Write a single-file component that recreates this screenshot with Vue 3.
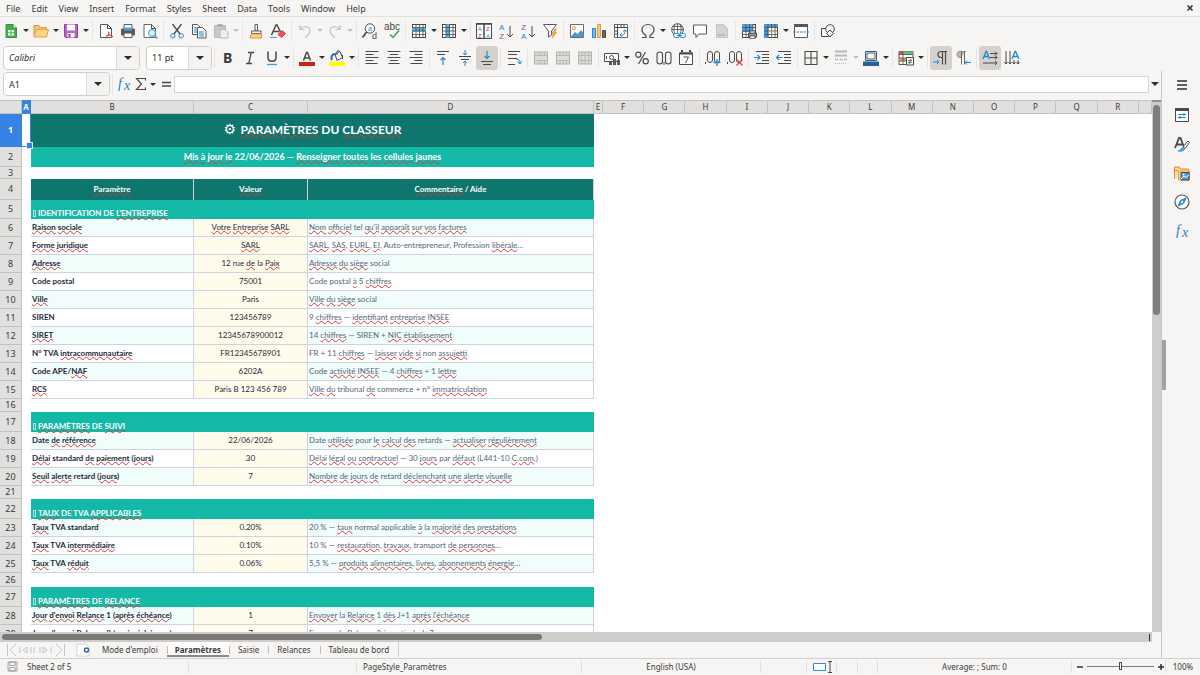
<script setup>
import { ref } from 'vue'

const menus = ['File', 'Edit', 'View', 'Insert', 'Format', 'Styles', 'Sheet', 'Data', 'Tools', 'Window', 'Help']

const K = 'fill="none" stroke="#4a4a48"'
const B = 'fill="none" stroke="#1e8bcd"'
const G = 'fill="none" stroke="#b9b8b6"'
const T = 'font-family="Liberation Sans, sans-serif"'
const grid = `<rect x="1.5" y="1.5" width="13" height="13" fill="#fff" stroke="#4a4a48"/>`
const gridLines = `<path d="M1 4.5h14M1 8h14M1 11.5h14M5 1v14M8.5 1v14M12 1v14" ${K} stroke-width=".8"/>`
const merged = `<rect x="1.5" y="2" width="13" height="12" fill="#deddda" stroke="#b1b0ae"/><path d="M1 5.5h14M1 10.5h14M5 2v3.5M8 2v3.5M11.5 2v3.5M5 10.5v3.5M8 10.5v3.5M11.5 10.5v3.5" ${G}/>`

const icons = {
  new: `<path d="M3 1.5h7l3.5 3.5v9.5H3z" fill="#43b04a" stroke="#38933f"/><path d="M10 1.5V5h3.5" fill="#fff" stroke="#38933f"/><path d="M5 7h6v5.5H5z" fill="#fff"/><path d="M5 9.8h6M8 7v5.5" stroke="#43b04a"/>`,
  open: `<path d="M1 13.5V2.5h5l1.5 2h6V7" fill="#f7c46c" stroke="#d99a3c"/><path d="M1 14 3.5 6.5h12L13.5 14z" fill="#fbd489" stroke="#e0a448"/>`,
  save: `<path d="M1.5 1.5h13v13h-12l-1-1z" fill="#b868c4" stroke="#8f3f9c"/><path d="M4 1.5h8v6H4zM4.5 10h7v4.5h-7z" fill="#fff"/><path d="M5.5 11h2v3.5h-2z" fill="#8f3f9c"/>`,
  pdf: `<path d="M2.5 1.5h7l4 4v9h-11z" fill="#fff" stroke="#5a5957"/><path d="M9.5 1.5v4h4" ${K}/><path d="M7.5 15c3-2 3.500-4 3-6.500M8 13c2-1 5-1 7 .5M10.500 9c0 2 2 4 4.500 5" fill="none" stroke="#e0393e"/>`,
  print: `<path d="M4 1.5h8V6H4z" fill="#fff" stroke="#5a5957"/><rect x="1" y="5.5" width="14" height="7" rx="1" fill="#5a5957"/><path d="M4 4.5h8v3H4z" fill="#4da3e0"/><path d="M4 10h8v4.5H4z" fill="#fff" stroke="#5a5957"/>`,
  preview: `<path d="M2 1.5h7.5l4 4v9H2z" fill="#fff" stroke="#6a6967"/><path d="M9.5 1.5v4h4" ${K}/><circle cx="10" cy="10" r="3.5" fill="#d8ecfa" stroke="#4a9ad8"/><path d="m12.5 12.5 3 3" stroke="#4a9ad8" stroke-width="1.5"/>`,
  cut: `<path d="M3.5 1 11 11M12.5 1 5 11" ${K} stroke-width="1.3"/><circle cx="3.8" cy="12.8" r="2.2" ${B}/><circle cx="12.2" cy="12.8" r="2.2" ${B}/>`,
  copy: `<path d="M1.5 1.5h5l3 3v7h-8z" fill="#fff" stroke="#5a5957"/><path d="M6.5 4.5h5l3.5 3.5v7H6.5z" fill="#fff" stroke="#5a5957"/><path d="M8 9h5M8 11h5M8 13h5M3 5h3M3 7h3M3 9h3" ${B}/>`,
  paste: `<path d="M1.5 2.5h11v12h-11z" fill="#c9c8c6" stroke="#b9b8b6"/><path d="M4.5 1h5v3h-5z" fill="#b0afad"/><path d="M7 6.5h5l3 3V15H7z" fill="#eee" stroke="#b9b8b6"/>`,
  brush: `<path d="M7 1.5h2.5V8H7z" fill="#fff" stroke="#5a5957"/><path d="M3.5 8h9.5v2.5H3.5z" fill="#fff" stroke="#5a5957"/><path d="M3.5 11 2 15h11.5V11z" fill="#fbd08a" stroke="#e09a3c"/>`,
  clear: `<path d="M1.5 12 6 2h1l4 8M3.5 8.5H9" ${K} stroke-width="1.5"/><path d="M0 14.5h7" stroke="#4a9ad8"/><path d="m8 11.5 4-4 3.5 3-4 4z" fill="#f0575c" stroke="#d8363c"/>`,
  undo: `<path d="M3 2v4.5h4.5M3.5 6C6 2.500 13 2.5 13 8c0 3.5-3 4.5-5 6.5" fill="none" stroke="#c4c3c1" stroke-width="1.2"/>`,
  redo: `<path d="M13 2v4.5H8.5M12.5 6C10 2.500 3 2.5 3 8c0 3.5 3 4.5 5 6.5" fill="none" stroke="#c4c3c1" stroke-width="1.2"/>`,
  find: `<circle cx="8" cy="5.500" r="4.700" fill="#fff" stroke="#4a4a48"/><path d="m4.500 9-4 5.5" stroke="#4a4a48" stroke-width="1.8"/><text x="6" y="8" font-size="7" fill="#1e8bcd" ${T}>a</text><text x="10" y="16" font-size="9" fill="#4a4a48" ${T}>d</text>`,
  spell: `<text x="0" y="7" font-size="10" fill="#4a4a48" ${T}>abc</text><path d="m6 11.5 3 3 6-7" fill="none" stroke="#3fa45a" stroke-width="1.5"/>`,
  rows: `${grid}<path d="M1 5h14v3.5H1z" fill="#57aee8"/>${gridLines}`,
  cols: `${grid}<path d="M5 1h4v14H5z" fill="#57aee8"/>${gridLines}`,
  sort: `<path d="M.5 .5h15v15H.5z" fill="#fff" stroke="#4a4a48"/><path d="M0 1h16M8 1v15" stroke="#4a4a48" stroke-width="1.5"/><text x="1.7" y="8" font-size="6" fill="#1e8bcd" ${T}>A</text><text x="2" y="15" font-size="6" fill="#9b3fb0" ${T}>Z</text><text x="10" y="8" font-size="6" fill="#9b3fb0" ${T}>Z</text><text x="10" y="15" font-size="6" fill="#1e8bcd" ${T}>A</text>`,
  asc: `<text x="1" y="7" font-size="8" fill="#1e8bcd" ${T}>A</text><text x="1.2" y="16" font-size="8" fill="#9b3fb0" ${T}>Z</text><path d="M12 3v11M9 11l3 3 3-3" ${K}/>`,
  desc: `<text x="1.2" y="7" font-size="8" fill="#9b3fb0" ${T}>Z</text><text x="1" y="16" font-size="8" fill="#1e8bcd" ${T}>A</text><path d="M12 3v11M9 11l3 3 3-3" ${K}/>`,
  filter: `<path d="M1.5 1.5h13l-5 6.5v4l-3 2V8z" fill="#fff" stroke="#5a5957"/><path d="m13 6-3.500 5h2l-1.5 4 4.5-5.5h-2L14.5 6z" fill="#f6b04c" stroke="#e08f28" stroke-width=".7"/>`,
  image: `<path d="M1.5 1.5h13v13h-13z" fill="#fff" stroke="#6a6967"/><path d="m2 13.5 4-4.5 2.5 2 3.5-4 2.500 3v4H2z" fill="#4a9ad8"/><circle cx="5" cy="5" r="1.5" fill="#fff" stroke="#eb9a38"/>`,
  chart: `<path d="M1.5 5.5h3v9h-3z" fill="#7cc0ee" stroke="#2d7fc0"/><path d="M6.5 1.5h3v13h-3z" fill="#fbc878" stroke="#e09a3c"/><path d="M11.5 7.5h3v7h-3z" fill="#6a6967" stroke="#4a4a48"/>`,
  pivot: `<path d="M1.5 1.5h13v13h-13z" fill="#fff" stroke="#6a6967"/><path d="M1.5 4.5h13M4.5 1.5v13" ${K}/><path d="M8 1.5v3M11 1.5v3M1.5 8h3M1.5 11h3" ${K}/><path d="M7 12c4 1 5-1 5-5M7 12l2-2M7 12l2 1.5M12 7l-2 1.500M12 7l1.500 2" ${B}/>`,
  omega: `<path d="M2 14.5h4v-2C3.5 11 2 9 2 6.5 2 3.5 4.5 1.5 8 1.5s6 2 6 5c0 2.500-1.5 4.5-4 6v2h4" ${K} stroke-width="1.2"/>`,
  link: `<circle cx="7.5" cy="6.5" r="5.8" fill="#fff" stroke="#4a4a48"/><path d="M2 6.5h11.5M3 3.5h9M7.5 1v10M5 1.5C3.5 5 3.5 8 5 11M10 1.5c1.5 3.5 1.5 6 0 9.5" ${K} stroke-width=".8"/><rect x="3.5" y="10.5" width="6" height="4" rx="2" fill="#fff" stroke="#1e8bcd"/><rect x="9.5" y="10.5" width="6" height="4" rx="2" fill="#fff" stroke="#1e8bcd"/><path d="M7 12.5h5" ${B}/>`,
  comment: `<path d="M1.5 2h13v9H7l-3 3.5V11H1.5z" fill="#fff" stroke="#5a5957"/>`,
  headfoot: `<path d="M2.5 1.5h7l4 4v9h-11z" fill="#d5d4d2" stroke="#c4c3c1"/><path d="M4 11h7v2H4z" fill="#bbb"/>`,
  printarea: `${grid}<path d="M1 1h11v8H1z" fill="#4da3e0"/>${gridLines}<path d="M7.5 10h8v4h-8z" fill="#7d9bb0" stroke="#4a4a48"/><path d="M9 8h5v2H9zM9 13h5v2.5H9z" fill="#fff" stroke="#4a4a48" stroke-width=".8"/>`,
  freeze: `${grid}<path d="M1 1h14v3.5H1zM1 1h4.5v14H1z" fill="#3f9be0"/>${gridLines}<path d="M9 4.5v10M5.5 8.5h9" stroke="#f0a848" stroke-width=".6"/>`,
  split: `<path d="M1.5 1.5h13v13h-13z" fill="#fff" stroke="#5a5957"/><path d="M1 1h14v3H1z" fill="#5a5957"/><path d="M0 9h16" stroke="#1e8bcd" stroke-dasharray="2.5 1"/>`,
  draw: `<path d="M1.5 5.5h7v8h-7z" ${K}/><circle cx="10" cy="6" r="4.3" fill="#f6f5f4" stroke="#4a4a48"/><path d="m10 7 3.5 3.500L10 14l-3.500-3.500z" fill="#f6f5f4" stroke="#4a4a48"/>`,
  bold: `<text x="3" y="13" font-size="14" font-weight="700" fill="#3a3a38" font-family="Noto Sans, sans-serif">B</text>`,
  italic: `<path d="M6 2.5h6M4 13.5h6M9.2 2.5 6.8 13.5" ${K} stroke-width="1.3"/>`,
  underline: `<path d="M4 1.5v6c0 5 8 5 8 0v-6" ${K} stroke-width="1.5"/><path d="M3 14.5h10" stroke="#4a9ad8" stroke-width="1.3"/>`,
  fontcolor: `<path d="m4.5 10.5 3-8h1l3 8M5.5 8h5" ${K} stroke-width="1.5"/><path d="M0 12h16v4H0z" fill="#c9211e"/>`,
  highlight: `<path d="m6 4 5-2.5 2.5 6-5.5 3z" fill="#fff" stroke="#4a4a48"/><path d="M8 5V1.5c1-1.5 2.500-1 2.5.5M13.5 5v4" ${K}/><path d="M6.5 4C3 4 1.5 7 3 10" fill="none" stroke="#1e6fa8" stroke-width="2"/><path d="M0 12h16v4H0z" fill="#ffff00"/>`,
  left: `<path d="M1.5 1.5h13M1.5 4.5h8M1.5 7.5h13M1.5 10.5h8M1.5 13.5h12" ${K}/>`,
  center: `<path d="M1.5 1.5h13M4 4.5h8M1.5 7.5h13M4 10.5h8M2.5 13.5h11" ${K}/>`,
  right: `<path d="M1.5 1.5h13M6.5 4.5h8M1.5 7.5h13M6.5 10.5h8M2.5 13.5h12" ${K}/>`,
  top: `<path d="M2 1.5h12M2 4.5h8" ${K} stroke-width="1.2"/><path d="M8 15V7.5M5.5 10 8 7.5l2.5 2.5" ${B} stroke-width="1.2"/>`,
  middle: `<path d="M2 6.5h12M4 9.5h8" ${K} stroke-width="1.2"/><path d="M8 0v5M6 3l2 2 2-2M8 16v-5M6 13l2-2 2 2" ${B}/>`,
  bottom: `<path d="M2 11.5h12M4 14.5h8" ${K} stroke-width="1.2"/><path d="M8 1v7.5M5.5 6 8 8.5 10.5 6" ${B} stroke-width="1.2"/>`,
  wrap: `<path d="M2 1.5h12M2 4.5h9M2 8.5h9M2 14.5h7" ${K} stroke-width="1.2"/><path d="M10 9c3 0 4 1.500 4 5M11.5 11.5l2.5 2.500 1.5-3" ${B}/>`,
  merge: merged,
  mergec: merged,
  unmerge: merged + `<path d="M4 5.5v5M8 5.5v5M12 5.5v5" ${G}/>`,
  currency: `<path d="M.5 3.5h14v8H.5z" fill="#fff" stroke="#4a4a48"/><circle cx="7.5" cy="7.5" r="2" ${K}/><path d="M2.5 6v3" ${K}/><path d="M5 12h3v3H5zM9 9h3v6H9zM13 10h3v5h-3z" fill="#5a5957"/>`,
  percent: `<circle cx="4.3" cy="4.8" r="2.6" ${K} stroke-width="1.2"/><circle cx="11.7" cy="11.2" r="2.6" ${K} stroke-width="1.2"/><path d="M11.5 2 4.5 14" ${K} stroke-width="1.2"/>`,
  number: `<rect x="1" y="2" width="5.5" height="12" rx="2.7" ${K} stroke-width="1.1"/><rect x="9.5" y="2" width="5.5" height="12" rx="2.7" ${K} stroke-width="1.1"/><path d="M8 12v3" ${K}/>`,
  date: `<path d="M1.5 3h13v11.5h-13z" fill="#fff" stroke="#4a4a48"/><path d="M1.5 3.500h13M4 0v2M12 0v2" fill="none" stroke="#4a4a48" stroke-width="2"/><path d="M5.5 7h5L7.5 13" ${K}/>`,
  adddec: `<path d="M.5 12v2" ${K}/><rect x="2.5" y="1.5" width="5" height="11" rx="2.5" ${K}/><rect x="9.5" y="1.5" width="5" height="11" rx="2.5" ${K}/><path d="M12 9v7M8.5 12.5h7" ${B} stroke-width="1.3"/>`,
  deldec: `<path d="M.5 12v2" ${K}/><rect x="2.5" y="1.5" width="5" height="11" rx="2.5" ${K}/><rect x="9.5" y="1.5" width="5" height="11" rx="2.5" ${K}/><path d="m9.5 9.5 6 6M15.5 9.5l-6 6" fill="none" stroke="#e0393e" stroke-width="1.2"/>`,
  indent: `<path d="M2 1.5h13M8 4.5h7M8 7.5h7M8 10.5h7M2 13.5h13" ${K}/><path d="M0 7.5h6M3.5 5 6 7.5 3.5 10" ${B} stroke-width="1.2"/>`,
  outdent: `<path d="M2 1.5h13M8 4.5h7M8 7.5h7M8 10.5h7M2 13.5h13" ${K}/><path d="M6.5 7.5H.5M3 5 .5 7.5 3 10" ${B} stroke-width="1.2"/>`,
  borders: `<path d="M2 1.5h12v13H2zM8 1.5v13M2 8h12" fill="none" stroke="#4a4a48" stroke-width="1.1"/>`,
  lines: `<path d="M2 1.5h12M2 5.5h12" ${G} stroke-width="2"/><path d="M2 9.5h12" ${G} stroke-dasharray="3 1.5" stroke-width="1.5"/><path d="M2 13.5h12" ${G} stroke-dasharray="1 1"/>`,
  bgcolor: `<path d="M2.5 1.5h11v9h-11z" fill="#fff" stroke="#1e5fa0"/><path d="M4 3h8v6H4z" fill="#f3f3f3" stroke="#5a5957"/><path d="M0 11.5h16V16H0z" fill="#2a6099"/>`,
  cond: `<path d="M1 1.5h14v13H1z" fill="#fff" stroke="#5a5957"/><path d="M1 1.5h9v3H1z" fill="#e0575c"/><path d="M5 1.5h10v3H5z" fill="#67c07a"/><path d="M1 8h7v3H1z" fill="#f0a060"/><path d="M1 4.5h14M1 8h8M1 11h7M5 1.5v13" ${K} stroke-width=".8"/><path d="M8.5 7.5h7v7.5h-7z" fill="#fff" stroke="#4a4a48"/><path d="M10 10.5h4M10 12.5h4M13 9l-2 5" ${K} stroke-width=".8"/>`,
  ltr: `<path d="M14 1.5H8c-4 0-4 6 0 6h1M9.5 1.5v13M12.5 1.5v13" ${K} stroke-width="1.2"/><path d="M0 12h6M4 10l2 2-2 2" ${B}/>`,
  rtl: `<path d="M11 1.5H5c-4 0-4 6 0 6h1" fill="#bbb" stroke="#8a8987"/><path d="M6.5 1.5v13M9.5 1.5v13" fill="none" stroke="#6a6967"/><path d="M16 12.5h-6M12 10.5l-2 2 2 2" ${B}/>`,
  horiz: `<path d="m1 9 3-7.5h.6L7.5 9M2 6.5h4.500" ${B} stroke-width="1.3"/><path d="M8 3.5h7M8 7.5h7M1 13h14M13 1.5l2 2-2 2M13 5.5l2 2-2 2M13 11l2 2-2 2" ${K}/>`,
  vert: `<path d="m8 9 3-7.5h.6L15 9M9 6.5h4.5" ${B} stroke-width="1.3"/><path d="M2 1v13M6 1v13M10 10v4M14 10v4M.5 12 2 14l1.5-2M4.500 12 6 14l1.5-2M8.5 12l1.5 2 1.5-2M12.5 12l1.5 2 1.5-2" ${K}/>`,
  fx: `<text x="2" y="12" font-size="14" font-style="italic" fill="#1e7fc8" font-family="Liberation Serif, serif">f</text><text x="8" y="14" font-size="14" font-style="italic" fill="#1e7fc8" font-family="Liberation Serif, serif">x</text>`,
  sigma: `<path d="M12.5 4.5v-2h-9L8.5 8l-5 5.5h9v-2" ${K} stroke-width="1.2"/>`,
  equals: `<path d="M4 6.5h9M4 10h9" ${K} stroke-width="1.5"/>`,
  hamburger: `<path d="M3 4h10M3 8h10M3 12h10" stroke="#2e2e2c" stroke-width="1.5"/>`,
  props: `<path d="M1.5 1.5h13v13h-13z" fill="#fff" stroke="#4a4a48"/><path d="M1 1h14v3H1z" fill="#4a4a48"/><path d="M4 7.5h8M4 10.5h8M10 6v3M6 9v3" ${B}/>`,
  styles: `<path d="m1 12 4-10h1.5l3 8M2.5 8.5H9" ${K} stroke-width="1.8"/><path d="m9 11 5-6 1.5 1.5-4.5 6z" fill="#fff" stroke="#4a4a48"/><path d="M4 15c3 0 3-4 6-3.5 2 2-1 4.5-6 3.5z" fill="#4da3e0" stroke="#1e7fc8" stroke-width=".6"/>`,
  gallery: `<path d="M.5 13V2h5l1 2h8v2" fill="#fbd9a8" stroke="#e8842c"/><path d="M.5 14V5.5h3" fill="none" stroke="#e8842c"/><path d="M4.5 6h11v9h-11z" fill="#fbe08a" stroke="#e8a23c"/><path d="M7 7.5h8V15H7z" fill="#4a9ad8" stroke="#4a4a48"/><path d="m7 14 3-3 2 1.5 3-2.5" fill="none" stroke="#fff"/><circle cx="9.5" cy="9.5" r="1" fill="#fff"/>`,
  navigator: `<circle cx="8" cy="8" r="7" fill="#fff" stroke="#5a5957" stroke-width="1.2"/><path d="m12 4-2.5 5.5L4 12l2.5-5.5z" fill="#4da3e0" stroke="#1e7fc8"/><circle cx="8" cy="8" r="1" fill="#fff"/>`,
  docsave: `<path d="M1.5 1.5h13v13h-13zM4 1.5h8v5H4zM4 9.5h8v5H4z" fill="none" stroke="#9a9997" stroke-width="1.3"/>`,
  close: `<path d="m4 4 8 8M12 4l-8 8" stroke="#2e2e2c" stroke-width="2.5"/>`,
}

const b = (icon, label, o = {}) => ({ icon, label, ...o })
const m = { menu: true }
const standard = [
  [b('new', 'New', m), b('open', 'Open', m), b('save', 'Save', m)],
  [b('pdf', 'Export as PDF'), b('print', 'Print'), b('preview', 'Print preview')],
  [b('cut', 'Cut'), b('copy', 'Copy'), b('paste', 'Paste', { menu: true, off: true })],
  [b('brush', 'Clone formatting'), b('clear', 'Clear formatting')],
  [b('undo', 'Undo', { menu: true, off: true }), b('redo', 'Redo', { menu: true, off: true })],
  [b('find', 'Find and replace'), b('spell', 'Spelling')],
  [b('rows', 'Row', m), b('cols', 'Column', m)],
  [b('sort', 'Sort'), b('asc', 'Sort ascending'), b('desc', 'Sort descending'), b('filter', 'AutoFilter')],
  [b('image', 'Image'), b('chart', 'Chart'), b('pivot', 'Pivot table')],
  [b('omega', 'Special character', m), b('link', 'Hyperlink'), b('comment', 'Comment'), b('headfoot', 'Headers and footers', { off: true })],
  [b('printarea', 'Define print area'), b('freeze', 'Freeze rows and columns', m), b('split', 'Split window')],
  [b('draw', 'Draw functions')],
]
const formatting = [
  [b('bold', 'Bold'), b('italic', 'Italic'), b('underline', 'Underline', m)],
  [b('fontcolor', 'Font color', m), b('highlight', 'Highlighting', m)],
  [b('left', 'Align left'), b('center', 'Center'), b('right', 'Align right')],
  [b('top', 'Align top'), b('middle', 'Center vertically'), b('bottom', 'Align bottom', { on: true })],
  [b('wrap', 'Wrap text')],
  [b('merge', 'Merge and center', { off: true }), b('mergec', 'Merge cells', { off: true }), b('unmerge', 'Unmerge', { off: true })],
  [b('currency', 'Currency', m), b('percent', 'Percent'), b('number', 'Number'), b('date', 'Date')],
  [b('adddec', 'Add decimal place'), b('deldec', 'Delete decimal place')],
  [b('indent', 'Increase indent'), b('outdent', 'Decrease indent')],
  [b('borders', 'Borders', m), b('lines', 'Border style', { menu: true, off: true }), b('bgcolor', 'Background color', m)],
  [b('cond', 'Conditional formatting', m)],
  [b('ltr', 'Left to right', { on: true }), b('rtl', 'Right to left')],
  [b('horiz', 'Text direction left to right', { on: true }), b('vert', 'Text direction top to bottom')],
]
const sidebar = [b('props', 'Properties'), b('styles', 'Styles'), b('gallery', 'Gallery'), b('navigator', 'Navigator'), b('fx', 'Functions')]

const columns = 'ABCDEFGHIJKLMNOPQR'.split('')

// A leading underscore flags a word for the spell checker.
const rows = [
  { n: 1, kind: 'title', a: '_PARAMÈTRES DU _CLASSEUR' },
  { n: 2, kind: 'subtitle', a: '_Mis _à _jour _le 22/06/2026 — _Renseigner _toutes _les _cellules _jaunes' },
  { n: 3, kind: 'blank short' },
  { n: 4, kind: 'head', a: '_Paramètre', b: '_Valeur', c: '_Commentaire / Aide' },
  { n: 5, kind: 'section first', a: 'IDENTIFICATION DE _L\'ENTREPRISE' },
  { n: 6, a: '_Raison _sociale', b: '_Votre _Entreprise _SARL', c: '_Nom _officiel tel _qu\'il _apparaît _sur _vos _factures', alt: true },
  { n: 7, a: '_Forme _juridique', b: '_SARL', c: '_SARL, _SAS, _EURL, _EI, Auto-entrepreneur, Profession _libérale…' },
  { n: 8, a: '_Adresse', b: '12 rue _de la _Paix', c: '_Adresse _du _siège social', alt: true },
  { n: 9, a: 'Code postal', b: '75001', c: 'Code postal _à 5 _chiffres' },
  { n: 10, a: '_Ville', b: 'Paris', c: '_Ville _du _siège social', alt: true },
  { n: 11, a: 'SIREN', b: '123456789', c: '9 _chiffres — _identifiant _entreprise _INSEE' },
  { n: 12, a: '_SIRET', b: '12345678900012', c: '14 _chiffres — SIREN + _NIC _établissement', alt: true },
  { n: 13, a: 'N° TVA _intracommunautaire', b: 'FR12345678901', c: 'FR + 11 _chiffres — _laisser _vide _si non _assujetti' },
  { n: 14, a: 'Code APE/_NAF', b: '6202A', c: 'Code _activité _INSEE — 4 _chiffres + 1 _lettre', alt: true },
  { n: 15, a: '_RCS', b: 'Paris B 123 456 789', c: '_Ville _du tribunal _de commerce + n° _immatriculation' },
  { n: 16, kind: 'blank' },
  { n: 17, kind: 'section', a: '_PARAMÈTRES DE _SUIVI' },
  { n: 18, a: 'Date _de _référence', b: '22/06/2026', c: 'Date _utilisée pour _le _calcul _des retards — _actualiser _régulièrement', alt: true },
  { n: 19, a: '_Délai standard _de _paiement (_jours)', b: '30', c: '_Délai _légal _ou _contractuel — 30 _jours par _défaut (L441-10 _C._com.)' },
  { n: 20, a: '_Seuil _alerte retard (_jours)', b: '7', c: '_Nombre _de _jours _de retard _déclenchant _une _alerte _visuelle', alt: true },
  { n: 21, kind: 'blank' },
  { n: 22, kind: 'section', a: '_TAUX DE TVA _APPLICABLES' },
  { n: 23, a: '_Taux TVA standard', b: '0.20%', c: '20 % — _taux normal applicable _à la _majorité _des _prestations', alt: true },
  { n: 24, a: '_Taux TVA _intermédiaire', b: '0.10%', c: '10 % — _restauration, _travaux, transport _de _personnes…' },
  { n: 25, a: '_Taux TVA _réduit', b: '0.06%', c: '5,5 % — _produits _alimentaires, _livres, _abonnements _énergie…', alt: true },
  { n: 26, kind: 'blank tall' },
  { n: 27, kind: 'section', a: '_PARAMÈTRES DE _RELANCE' },
  { n: 28, a: '_Jour _d\'envoi _Relance 1 (_après _échéance)', b: '1', c: '_Envoyer la _Relance 1 _dès J+1 _après _l\'échéance', alt: true },
  { n: 29, a: '_Jour _d\'envoi _Relance 2 (_après _échéance)', b: '7', c: '_Envoyer la _Relance 2 _à _partir _de J+7' },
]

const parts = (text) =>
  text.split(/(_[\p{L}']+)/u).filter(Boolean).map((t) => (t[0] === '_' ? { t: t.slice(1), bad: true } : { t, bad: false }))

const cellsOf = (r) => {
  if (!r.a) return []
  if (r.b === undefined) return [{ cls: 'wide', span: 3, parts: parts(r.a) }]
  return [
    { cls: 'label', span: 1, parts: parts(r.a) },
    { cls: 'value', span: 1, parts: parts(r.b) },
    { cls: 'note', span: 1, parts: parts(r.c) },
  ]
}
const isSection = (r) => (r.kind || '').startsWith('section')

const sheets = ["Mode d'emploi", 'Paramètres', 'Saisie', 'Relances', 'Tableau de bord']
const active = ref('Paramètres')
const fontName = ref('Calibri')
const fontSize = ref('11 pt')
const cellRef = ref('A1')
const formula = ref('')
const zoom = ref(50)
</script>

<template>
  <div class="app">
    <nav class="menubar">
      <button v-for="x in menus" :key="x" type="button">{{ x }}</button>
      <button class="close" type="button" aria-label="Close document"><svg viewBox="0 0 16 16" v-html="icons.close" /></button>
    </nav>

    <div class="toolbar" role="toolbar" aria-label="Standard">
      <div v-for="(g, i) in standard" :key="i" class="group">
        <template v-for="x in g" :key="x.icon">
          <button class="tool" type="button" :aria-label="x.label" :disabled="x.off"><svg viewBox="0 0 16 16" v-html="icons[x.icon]" /></button>
          <button v-if="x.menu" class="drop" type="button" :aria-label="x.label + ' options'" :disabled="x.off"><i /></button>
        </template>
      </div>
    </div>

    <div class="toolbar" role="toolbar" aria-label="Formatting">
      <div class="combo font">
        <input v-model="fontName" aria-label="Font name"><button type="button" aria-label="Font list"><i /></button>
      </div>
      <div class="combo size">
        <input v-model="fontSize" aria-label="Font size"><button type="button" aria-label="Size list"><i /></button>
      </div>
      <div v-for="(g, i) in formatting" :key="i" class="group lead">
        <template v-for="x in g" :key="x.icon">
          <button class="tool" :class="{ on: x.on }" type="button" :aria-label="x.label" :disabled="x.off"><svg viewBox="0 0 16 16" v-html="icons[x.icon]" /></button>
          <button v-if="x.menu" class="drop" type="button" :aria-label="x.label + ' options'" :disabled="x.off"><i /></button>
        </template>
      </div>
    </div>

    <div class="work">
      <main>
        <div class="formulabar">
          <div class="combo cellref">
            <input v-model="cellRef" aria-label="Name box"><button type="button" aria-label="Named ranges"><i /></button>
          </div>
          <div class="group lead">
            <button class="fn" type="button" aria-label="Function wizard"><svg viewBox="0 0 16 16" v-html="icons.fx" /></button>
            <button class="fn" type="button" aria-label="Select function"><svg viewBox="0 0 16 16" v-html="icons.sigma" /></button>
            <button class="drop" type="button" aria-label="Function options"><i /></button>
            <button class="fn" type="button" aria-label="Formula"><svg viewBox="0 0 16 16" v-html="icons.equals" /></button>
          </div>
          <input v-model="formula" class="formula" aria-label="Formula input">
          <button class="drop big" type="button" aria-label="Expand formula bar"><i /></button>
        </div>

        <div class="sheetrow">
          <div class="sheet">
            <table>
              <colgroup>
                <col class="c-n"><col class="c-a"><col class="c-b"><col class="c-c"><col class="c-d"><col class="c-e">
                <col v-for="i in 13" :key="i"><col class="c-end">
              </colgroup>
              <thead>
                <tr>
                  <th />
                  <th v-for="c in columns" :key="c" scope="col" :class="{ sel: c === 'A' }">{{ c }}</th>
                  <th />
                </tr>
              </thead>
              <tbody>
                <tr v-for="r in rows" :key="r.n" :class="[r.kind || 'data', { alt: r.alt }]">
                  <th scope="row" :class="{ sel: r.n === 1 }">{{ r.n }}</th>
                  <td :class="{ cursor: r.n === 1 }" />
                  <td v-for="c in cellsOf(r)" :key="c.cls" :colspan="c.span" :class="c.cls"><span v-if="r.kind === 'title'" class="gear">⚙ </span><span v-if="isSection(r)" class="tofu" /><template v-for="(p, k) in c.parts" :key="k"><span v-if="p.bad" class="bad">{{ p.t }}</span><template v-else>{{ p.t }}</template></template></td>
                </tr>
              </tbody>
            </table>
          </div>
          <div class="vscroll"><div /></div>
        </div>
        <div class="hscroll"><div /><span /></div>

        <div class="tabs">
          <button class="nav" type="button" aria-label="Scroll sheet tabs">
            <svg viewBox="0 0 62 14"><path d="M2.5 1v12M11 1 5 7l6 6M22 4l-4 3 4 3zM26 4v6M29 4v6M35 4v6M38 4l4 3-4 3zM51 1l6 6-6 6M59.5 1v12M15 4v6M46 4v6" /></svg>
          </button>
          <button class="add" type="button" aria-label="Add sheet">
            <svg viewBox="0 0 14 14"><path d="M1 1h9l3 3v9H1z" fill="#fff" stroke="#d5d4d2" /><circle cx="10.5" cy="7" r="2" fill="#fff" stroke="#2a66b0" stroke-width="1.5" /></svg>
          </button>
          <button v-for="s in sheets" :key="s" class="tab" :class="{ active: s === active }" type="button" @click="active = s">{{ s }}</button>
        </div>
      </main>
      <aside>
        <div class="grip"><span /></div>
        <div class="deck">
          <button type="button" aria-label="Sidebar settings"><svg viewBox="0 0 16 16" v-html="icons.hamburger" /></button>
          <button v-for="x in sidebar" :key="x.icon" type="button" :aria-label="x.label"><svg viewBox="0 0 16 16" v-html="icons[x.icon]" /></button>
        </div>
      </aside>
    </div>

    <footer>
      <div class="first"><svg viewBox="0 0 16 16" v-html="icons.docsave" />Sheet 2 of 5</div>
      <div />
      <div class="style">PageStyle_Paramètres</div>
      <div class="mid">English (USA)</div>
      <div />
      <div class="modes">
        <svg viewBox="0 0 22 12"><path d="M1.5 2.5h12v7h-12z" fill="#fff" stroke="#2f8fc9" /><path d="M16 .5h4M18 .5v11M16 11.5h4" fill="none" stroke="#4a4a48" /></svg>
      </div>
      <div /><div />
      <div class="mid">Average: ; Sum: 0</div>
      <div class="zoom">
        <button type="button" aria-label="Zoom out"><svg viewBox="0 0 8 8"><path d="M1 4h6" /></svg></button>
        <input v-model="zoom" type="range" min="0" max="100" aria-label="Zoom">
        <button type="button" aria-label="Zoom in"><svg viewBox="0 0 8 8"><path d="M1 4h6M4 1v6" /></svg></button>
      </div>
      <div class="pct">100%</div>
    </footer>
  </div>
</template>

<style>
body { margin: 0; overflow: hidden; }
</style>

<style scoped>
* { box-sizing: border-box; }
.app {
  display: flex; flex-direction: column; height: 100vh;
  background: #f6f5f4; color: #3a3a38;
  font: 9px "Noto Sans", sans-serif;
}
button { border: 0; padding: 0; margin: 0; background: none; font: inherit; color: inherit; display: flex; align-items: center; justify-content: center; }
input { font: inherit; color: #2e2e2c; border: 0; margin: 0; outline: 0; min-width: 0; }
svg { display: block; width: 16px; height: 16px; flex: none; overflow: visible; }

.menubar { display: flex; gap: 11px; height: 17px; padding: 0 5px 0 6px; align-items: center; border-bottom: 1px solid #e4e3e1; flex: none; }
.close { margin-left: auto; }
.close svg { width: 10px; height: 10px; }

.toolbar { display: flex; align-items: center; height: 27px; flex: none; }
.group { display: flex; align-items: center; }
.group + .group::before, .lead::before { content: ""; width: 1px; height: 20px; margin: 0 2px; background: #e6e5e3; }
.tool { width: 22px; height: 24px; border-radius: 3px; }
.on { background: #d5d2ce; }
.drop { width: 8px; height: 20px; }
.drop i, .combo i { border: solid transparent; border-width: 3px 3px 0; border-top-color: #2e2e2c; }
.drop:disabled i { border-top-color: #c0bfbd; }
.drop.big { width: 12px; }
.drop.big i, .combo i { border-width: 4px 4px 0; }

.combo { display: flex; height: 24px; border: 1px solid #d2cfcb; border-radius: 4px; background: #fff; overflow: hidden; flex: none; }
.combo input { flex: 1; padding: 0 5px; background: none; }
.combo button { width: 23px; background: #f4f3f2; border-left: 1px solid #dddbd8; }
.font { width: 137px; margin-left: 3px; }
.font input { font-style: italic; }
.size { width: 66px; margin-left: 6px; }
.cellref { width: 107px; margin-left: 3px; }

.work { display: flex; flex: 1; min-height: 0; }
main { display: flex; flex-direction: column; flex: 1; min-width: 0; }
.formulabar { display: flex; align-items: center; height: 29px; padding-bottom: 3px; flex: none; }
.fn { width: 17px; height: 20px; }
.formula { flex: 1; height: 17px; background: #fff; border: 1px solid #d8d6d3; }

.sheetrow { display: flex; flex: 1; min-height: 0; }
.sheet { flex: 1; min-width: 0; background: #fff; overflow: hidden; }
table { table-layout: fixed; width: 100%; border-collapse: separate; border-spacing: 0; line-height: 10px; }
.c-n { width: 22px; } .c-a { width: 9px; } .c-b { width: 163px; } .c-c { width: 114px; } .c-d { width: 286px; } .c-e { width: 9px; } .c-end { width: 13px; }
th, td { padding: 0; white-space: nowrap; }
thead th { height: 14px; background: #e1e0de; border: solid #c3c2c0; border-width: 1px 1px 1px 0; font-size: 8px; font-weight: 400; }
tbody th { background: #e1e0de; border: solid #c3c2c0; border-width: 0 1px 1px 0; font-weight: 400; }
thead .sel, tbody .sel { background: #3584e4; border-color: #3584e4; color: #fff; font-weight: 700; }
td { font-family: Lato, sans-serif; }
.cursor { position: relative; border: solid #3584e4; border-width: 0 1px 1px 0; }
.cursor::after { content: ""; position: absolute; right: -3px; bottom: -3px; width: 5px; height: 5px; background: #3584e4; border: 1px solid #dbe8fa; z-index: 1; }
.bad { text-decoration: underline wavy #d8383c 1px; text-decoration-skip-ink: none; text-underline-offset: 0; }

.title { height: 33px; } .subtitle { height: 20px; } .head { height: 21px; } .section { height: 20px; } .first.section { height: 19px; }
.data { height: 18px; } .blank { height: 13px; } .short { height: 12px; } .tall { height: 14px; }
.wide { background: #14b8a6; color: #fff; font-weight: 700; }
.title .wide { background: #0f766e; font-size: 12px; line-height: 16px; padding-bottom: 2px; text-align: center; }
.gear { font: 14px/16px "DejaVu Sans", sans-serif; }
.subtitle .wide { text-align: center; font-size: 9px; }
.section .wide { vertical-align: bottom; font-size: 8px; padding: 0 0 1px 2px; }
.tofu { display: inline-block; width: 3px; height: 7px; margin-right: 2px; border: 1px solid #b6e8e2; vertical-align: -1px; }
.head .label, .head .value, .head .note { background: #0f766e; color: #fff; font-weight: 700; font-size: 8px; text-align: center; border-right: 1px solid #cbd5e1; padding-bottom: 2px; }
.data td { font-size: 8px; padding-bottom: 1px; }
.data .label, .data .value, .data .note { border: solid #cbd5e1; border-width: 0 1px 1px 0; }
.data .label { font-weight: 700; color: #1e293b; padding-left: 1px; }
.data .value { background: #fffbeb; text-align: center; color: #1e293b; }
.data .note { color: #57657a; padding-left: 1px; }
.alt .label, .alt .note { background: #f0fdfa; }

.vscroll { width: 9px; background: #cecdcc; border-top: 2px solid #8f8e8c; padding: 3px 1px; flex: none; }
.vscroll div { height: 40%; border-radius: 4px; background: #7f7e7d; }
.hscroll { display: flex; align-items: center; justify-content: space-between; height: 10px; margin-right: 9px; padding: 0 2px; background: #cecdcc; flex: none; }
.hscroll div { width: 47%; height: 6px; border-radius: 3px; background: #7a7978; }
.hscroll span { width: 1px; height: 7px; background: #2e2e2c; }

.tabs { display: flex; height: 16px; font-size: 8px; flex: none; }
.nav { width: 72px; }
.nav svg { width: 62px; height: 14px; fill: none; stroke: #c6c5c3; }
.add { width: 21px; }
.add svg { width: 14px; height: 14px; }
.tab { padding: 0 9px; position: relative; height: 15px; }
.tab + .tab::before { content: ""; position: absolute; left: 0; top: 4px; width: 1px; height: 8px; background: #bdbcba; }
.tab:last-child { border-right: 1px solid #cfcecc; }
.tab.active { background: #fff; font-weight: 700; padding: 2px 8px 0; border-bottom: 2px solid #8a8987; }

aside { display: flex; width: 39px; border-left: 1px solid #c9c8c6; flex: none; }
.grip { display: flex; align-items: center; width: 4px; }
.grip span { width: 4px; height: 50px; background: #a3a2a0; }
.deck { display: flex; flex-direction: column; gap: 9px; padding-top: 4px; }
.deck button { width: 32px; height: 20px; }
.deck button:first-child { margin-bottom: 1px; }

footer {
  display: grid; grid-template-columns: 189fr 168fr 225fr 179fr 46px 30px 21px 20px 194fr 94px 34px;
  height: 17px; border-top: 1px solid #d0cfcd; font-size: 8px; flex: none;
}
footer > div { display: flex; align-items: center; border-right: 1px solid #e2e1df; margin: 1px 0 2px; white-space: nowrap; }
footer .first { padding-left: 7px; gap: 9px; }
.first svg { width: 11px; height: 11px; }
.style { padding-left: 6px; }
.mid { justify-content: center; }
.modes { padding-left: 5px; }
.modes svg { width: 22px; height: 12px; }
.zoom { gap: 3px; padding-left: 4px; }
.zoom svg { width: 8px; height: 8px; stroke: #2e2e2c; stroke-width: 1.5; }
.zoom input { flex: 1; height: 12px; appearance: none; background: none; }
.zoom input::-webkit-slider-runnable-track { height: 1px; background: #7a7978; }
.zoom input::-webkit-slider-thumb { appearance: none; width: 3px; height: 8px; margin-top: -4px; border: 1px solid #4a4a48; background: #fff; }
footer .pct { justify-content: center; border: 0; }
</style>
